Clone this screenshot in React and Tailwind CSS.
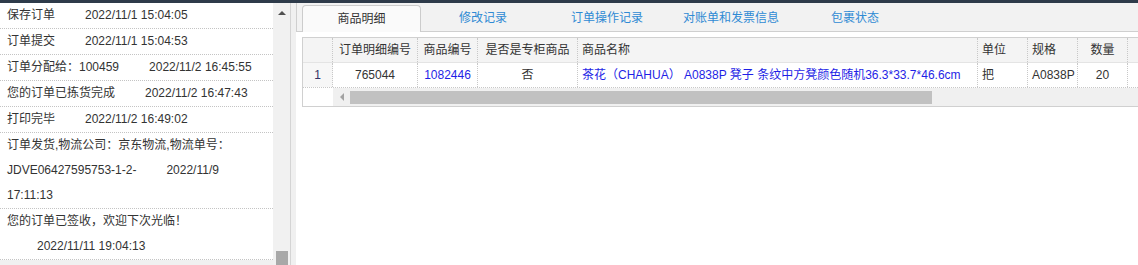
const LOGS = [
  { lines: [['保存订单', '2022/11/1 15:04:05']] },
  { lines: [['订单提交', '2022/11/1 15:04:53']] },
  { lines: [['订单分配给：100459', '2022/11/2 16:45:55']] },
  { lines: [['您的订单已拣货完成', '2022/11/2 16:47:43']] },
  { lines: [['打印完毕', '2022/11/2 16:49:02']] },
  {
    lines: [
      ['订单发货,物流公司：京东物流,物流单号：', null],
      ['JDVE06427595753-1-2-', '2022/11/9'],
      ['17:11:13', null],
    ],
  },
  {
    lines: [
      ['您的订单已签收，欢迎下次光临！', null],
      ['', '2022/11/11 19:04:13'],
    ],
  },
];

const TABS = ['商品明细', '修改记录', '订单操作记录', '对账单和发票信息', '包裹状态'];

const COLS = [
  { title: '订单明细编号', w: 'w-[85px]', align: 'text-center', value: '765044' },
  { title: '商品编号', w: 'w-[60px]', align: 'text-center', value: '1082446', link: true },
  { title: '是否是专柜商品', w: 'w-[100px]', align: 'text-center', value: '否' },
  {
    title: '商品名称',
    w: 'w-[400px]',
    align: 'text-left',
    value: '茶花（CHAHUA） A0838P 凳子 条纹中方凳颜色随机36.3*33.7*46.6cm',
    link: true,
  },
  { title: '单位', w: 'w-[50px]', align: 'text-left', value: '把' },
  { title: '规格', w: 'w-[50px]', align: 'text-left', value: 'A0838P' },
  { title: '数量', w: 'w-[50px]', align: 'text-center', value: '20' },
  { title: '', w: 'w-[60px]', align: 'text-center', value: '' },
];

function LogPanel() {
  return (
    <div className="flex w-[290px] shrink-0 bg-[#f0f0f0]">
      <div className="w-[273px] bg-white self-start">
        {LOGS.map((log, i) => (
          <div key={i} className="border-b border-dotted border-[#c4c4c4] pl-[7px]">
            {log.lines.map(([text, time], j) => (
              <div key={j} className="h-[25px] leading-[25px] whitespace-nowrap">
                {text}
                {time && <span className="ml-[30px]">{time}</span>}
              </div>
            ))}
          </div>
        ))}
      </div>
      <div className="w-[17px] flex flex-col justify-between items-center bg-[#f1f1f1]">
        <div className="mt-[8px] w-0 h-0 border-l-[4px] border-r-[4px] border-b-[4px] border-l-transparent border-r-transparent border-b-[#505050]" />
        <div className="w-[12px] h-[14px] bg-[#a8a8a8]" />
      </div>
    </div>
  );
}

function Tabs() {
  return (
    <div className="h-[29px] flex items-end bg-[#f2f2f2] border-b border-l border-[#cfcfcf] pl-[5px]">
      {TABS.map((t, i) =>
        i === 0 ? (
          <div
            key={t}
            className="w-[119px] h-[27px] -mb-px bg-[#fafafa] border border-b-0 border-[#cccccc] rounded-t-[4px] flex items-center justify-center text-[#333]"
          >
            {t}
          </div>
        ) : (
          <div key={t} className="w-[124px] h-[27px] flex items-center justify-center text-[#2f8ad4]">
            {t}
          </div>
        )
      )}
    </div>
  );
}

function DetailTable() {
  return (
    <div className="ml-[6px] mt-[5px] border-l border-t border-b border-[#d0d0d0] overflow-hidden">
      <div className="flex h-[25px] bg-[#f4f4f4] border-b border-[#e4e4e4] text-[#333]">
        <div className="w-[30px] shrink-0 border-r border-dotted border-[#c8c8c8]" />
        {COLS.map((c, i) => (
          <div
            key={i}
            className={`${c.w} shrink-0 ${c.align} leading-[25px] px-[4px] border-r border-dotted border-[#c8c8c8] whitespace-nowrap`}
          >
            {c.title}
          </div>
        ))}
      </div>
      <div className="flex h-[25px] border-b border-dotted border-[#c8c8c8]">
        <div className="w-[30px] shrink-0 bg-[#f7f7f7] text-center leading-[24px] text-[#333366] border-r border-dotted border-[#c8c8c8]">
          1
        </div>
        {COLS.map((c, i) => (
          <div
            key={i}
            className={`${c.w} shrink-0 ${c.align} leading-[24px] px-[4px] border-r border-dotted border-[#c8c8c8] whitespace-nowrap ${c.link ? 'text-[#1f1fe6]' : 'text-[#333]'}`}
          >
            {c.value}
          </div>
        ))}
      </div>
      <div className="flex h-[18px]">
        <div className="w-[30px] shrink-0 bg-white" />
        <div className="flex-1 flex items-center bg-[#f0f0f0]">
          <div className="w-[17px] h-full flex items-center justify-center">
            <div className="w-0 h-0 border-t-[4px] border-b-[4px] border-r-[4px] border-t-transparent border-b-transparent border-r-[#a3a3a3]" />
          </div>
          <div className="w-[582px] h-[13px] bg-[#c1c1c1]" />
        </div>
      </div>
    </div>
  );
}

export default function App() {
  return (
    <div
      className="w-[1138px] h-[265px] overflow-hidden bg-white text-[12px] text-[#333]"
      style={{ fontFamily: '"Liberation Sans", "Noto Sans CJK SC", sans-serif' }}
    >
      <div className="h-[3px] bg-[#2e3b4a]" />
      <div className="flex h-[262px]">
        <LogPanel />
        <div className="w-px bg-[#d4d4d4]" />
        <div className="w-[5px] bg-[#f0f0f0]" />
        <div className="flex-1 min-w-0 bg-white">
          <Tabs />
          <DetailTable />
        </div>
      </div>
    </div>
  );
}
